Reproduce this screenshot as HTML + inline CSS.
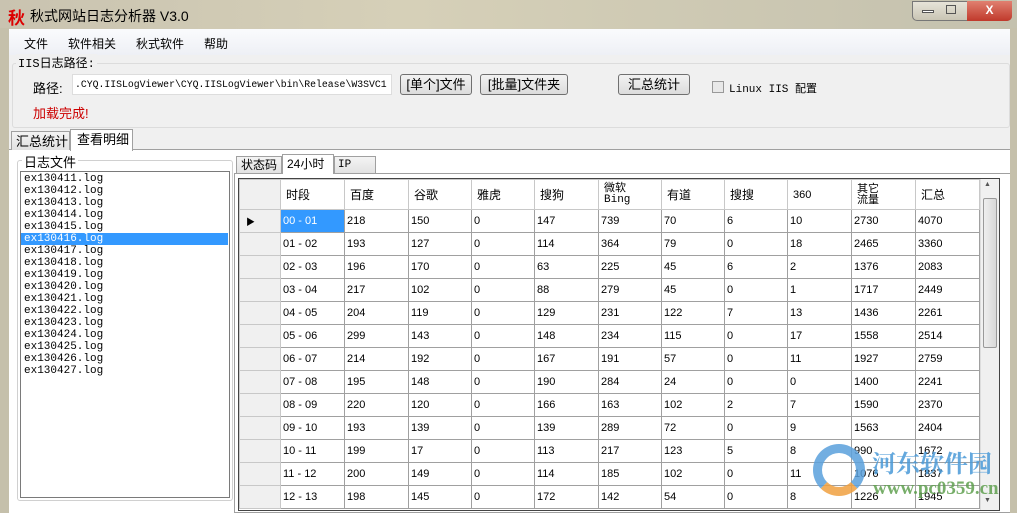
<!DOCTYPE html>
<html><head><meta charset="utf-8"><style>
*{margin:0;padding:0;box-sizing:border-box}
body{width:1017px;height:513px;overflow:hidden;position:relative;background:#f0f0f0;font-family:"Liberation Sans","Noto Sans CJK SC",sans-serif;font-size:12px;color:#000}
.a{position:absolute}
.title{left:0;top:0;width:1017px;height:30px;background:linear-gradient(90deg,#c9c3b0 0%,#d6d0b8 40%,#c4c1ae 100%)}
.frame{left:0;top:28px;width:9px;height:485px;background:#c5c0ab}
.frameR{left:1010px;top:28px;width:7px;height:485px;background:#c5c0ab}
.btn{border:1px solid #707070;border-radius:3px;background:linear-gradient(#f2f2f2,#dcdcdc);text-align:center;line-height:20px;font-size:13px}
.mono{font-family:"Liberation Mono","Noto Sans CJK SC",monospace}
table{border-collapse:collapse;table-layout:fixed}
td{border:1px solid #a0a0a0;height:23px;padding-left:2px;font-size:11px;white-space:nowrap;overflow:hidden}
tr.h td{height:30px;font-size:12px;padding-left:5px;border-color:#c8c8c8}
td.rh{background:#f0f0f0;border-color:#c8c8c8}
</style></head><body>
<div class="a title"></div>
<div class="a" style="left:8px;top:4px;color:#d00;font-size:17px;font-weight:bold">秋</div>
<div class="a" style="left:30px;top:6px;font-size:14px">秋式网站日志分析器 V3.0</div>
<div class="a" style="left:912px;top:1px;width:100px;height:20px;border:1px solid #777;border-radius:0 0 5px 5px;background:linear-gradient(#e6e3d8,#c9c5b4)"></div>
<div class="a" style="left:967px;top:1px;width:45px;height:20px;border-radius:0 0 5px 0;background:linear-gradient(#e08070,#c0392b);color:#fff;text-align:center;font-weight:bold;line-height:18px">X</div>
<div class="a" style="left:922px;top:10px;width:12px;height:3px;border:1px solid #555;background:#fff"></div>
<div class="a" style="left:946px;top:5px;width:10px;height:9px;border:1px solid #555"></div>
<div class="a frame"></div><div class="a frameR"></div>
<div class="a" style="left:9px;top:29px;width:1001px;height:26px;background:linear-gradient(#fafbfd,#eef0f5)"></div>
<div class="a" style="left:24px;top:35px;font-size:12px">文件</div>
<div class="a" style="left:68px;top:35px;font-size:12px">软件相关</div>
<div class="a" style="left:136px;top:35px;font-size:12px">秋式软件</div>
<div class="a" style="left:204px;top:35px;font-size:12px">帮助</div>
<div class="a" style="left:12px;top:63px;width:998px;height:65px;border:1px solid #dcdcdc;border-radius:3px"></div>
<div class="a mono" style="left:16px;top:54px;background:#f0f0f0;padding:0 2px;font-size:12px">IIS日志路径:</div>
<div class="a" style="left:33px;top:78px;font-size:13px">路径:</div>
<div class="a mono" style="left:72px;top:74px;width:320px;height:21px;background:#fff;border:1px solid #ddd;font-size:9.8px;line-height:19px;padding-left:2px;overflow:hidden;white-space:nowrap">.CYQ.IISLogViewer\CYQ.IISLogViewer\bin\Release\W3SVC1</div>
<div class="a btn" style="left:400px;top:74px;width:72px;height:21px">[单个]文件</div>
<div class="a btn" style="left:480px;top:74px;width:88px;height:21px">[批量]文件夹</div>
<div class="a btn" style="left:618px;top:74px;width:72px;height:21px">汇总统计</div>
<div class="a" style="left:712px;top:81px;width:12px;height:12px;border:1px solid #999;background:#e8e8e8"></div>
<div class="a mono" style="left:729px;top:80px;font-size:11px">Linux IIS 配置</div>
<div class="a" style="left:33px;top:103px;color:#c00;font-size:13px">加载完成!</div>
<div class="a" style="left:9px;top:149px;width:1001px;height:364px;background:#fff;border-top:1px solid #a0a0a0"></div>
<div class="a" style="left:11px;top:131px;width:59px;height:19px;border:1px solid #a0a0a0;border-bottom:none;background:linear-gradient(#f4f4f4,#e2e2e2);font-size:13px;padding-left:4px;line-height:19px">汇总统计</div>
<div class="a" style="left:70px;top:129px;width:63px;height:22px;border:1px solid #a0a0a0;border-bottom:none;background:#fff;font-size:13px;padding-left:6px;line-height:20px">查看明细</div>
<div class="a" style="left:17px;top:160px;width:216px;height:341px;border:1px solid #d0d0d0;border-radius:3px"></div>
<div class="a" style="left:22px;top:152px;background:#fff;padding:0 2px;font-size:13px">日志文件</div>
<div class="a mono" style="left:20px;top:171px;width:210px;height:327px;border:1px solid #7a7a7a;font-size:11px;line-height:12px;padding-top:1px">
<div style="padding-left:3px">ex130411.log</div><div style="padding-left:3px">ex130412.log</div><div style="padding-left:3px">ex130413.log</div><div style="padding-left:3px">ex130414.log</div><div style="padding-left:3px">ex130415.log</div><div style="padding-left:3px;background:#3399ff;color:#fff;width:207px">ex130416.log</div><div style="padding-left:3px">ex130417.log</div><div style="padding-left:3px">ex130418.log</div><div style="padding-left:3px">ex130419.log</div><div style="padding-left:3px">ex130420.log</div><div style="padding-left:3px">ex130421.log</div><div style="padding-left:3px">ex130422.log</div><div style="padding-left:3px">ex130423.log</div><div style="padding-left:3px">ex130424.log</div><div style="padding-left:3px">ex130425.log</div><div style="padding-left:3px">ex130426.log</div><div style="padding-left:3px">ex130427.log</div></div>
<div class="a" style="left:234px;top:173px;width:776px;height:340px;border:1px solid #a0a0a0;border-right:none"></div>
<div class="a" style="left:236px;top:156px;width:46px;height:18px;border:1px solid #a0a0a0;background:linear-gradient(#f4f4f4,#e2e2e2);font-size:12px;padding-left:4px;line-height:17px">状态码</div>
<div class="a" style="left:282px;top:154px;width:52px;height:20px;border:1px solid #a0a0a0;border-bottom:none;background:#fff;font-size:12px;padding-left:4px;line-height:18px">24小时</div>
<div class="a mono" style="left:334px;top:156px;width:42px;height:18px;border:1px solid #a0a0a0;background:linear-gradient(#f4f4f4,#e2e2e2);font-size:11px;padding-left:3px;line-height:17px">IP</div>
<div class="a" style="left:238px;top:178px;width:762px;height:333px;border:1px solid #444;background:#fff;overflow:hidden">
<table style="width:740px">
<colgroup><col style="width:41px"><col style="width:64px"><col style="width:64px"><col style="width:63px"><col style="width:63px"><col style="width:64px"><col style="width:63px"><col style="width:63px"><col style="width:63px"><col style="width:64px"><col style="width:64px"><col style="width:64px"></colgroup>
<tr class="h"><td class="rh"></td><td>时段</td><td>百度</td><td>谷歌</td><td>雅虎</td><td>搜狗</td><td style="line-height:11px;font-size:11px">微软<br><span class="mono">Bing</span></td><td>有道</td><td>搜搜</td><td style="font-size:11px">360</td><td style="line-height:11px;font-size:11px">其它<br>流量</td><td>汇总</td></tr>
<tr><td class="rh" style="font-size:9px;padding-left:6px">▶</td><td style="background:#3399ff;color:#fff">00 - 01</td><td>218</td><td>150</td><td>0</td><td>147</td><td>739</td><td>70</td><td>6</td><td>10</td><td>2730</td><td>4070</td></tr>
<tr><td class="rh"></td><td>01 - 02</td><td>193</td><td>127</td><td>0</td><td>114</td><td>364</td><td>79</td><td>0</td><td>18</td><td>2465</td><td>3360</td></tr>
<tr><td class="rh"></td><td>02 - 03</td><td>196</td><td>170</td><td>0</td><td>63</td><td>225</td><td>45</td><td>6</td><td>2</td><td>1376</td><td>2083</td></tr>
<tr><td class="rh"></td><td>03 - 04</td><td>217</td><td>102</td><td>0</td><td>88</td><td>279</td><td>45</td><td>0</td><td>1</td><td>1717</td><td>2449</td></tr>
<tr><td class="rh"></td><td>04 - 05</td><td>204</td><td>119</td><td>0</td><td>129</td><td>231</td><td>122</td><td>7</td><td>13</td><td>1436</td><td>2261</td></tr>
<tr><td class="rh"></td><td>05 - 06</td><td>299</td><td>143</td><td>0</td><td>148</td><td>234</td><td>115</td><td>0</td><td>17</td><td>1558</td><td>2514</td></tr>
<tr><td class="rh"></td><td>06 - 07</td><td>214</td><td>192</td><td>0</td><td>167</td><td>191</td><td>57</td><td>0</td><td>11</td><td>1927</td><td>2759</td></tr>
<tr><td class="rh"></td><td>07 - 08</td><td>195</td><td>148</td><td>0</td><td>190</td><td>284</td><td>24</td><td>0</td><td>0</td><td>1400</td><td>2241</td></tr>
<tr><td class="rh"></td><td>08 - 09</td><td>220</td><td>120</td><td>0</td><td>166</td><td>163</td><td>102</td><td>2</td><td>7</td><td>1590</td><td>2370</td></tr>
<tr><td class="rh"></td><td>09 - 10</td><td>193</td><td>139</td><td>0</td><td>139</td><td>289</td><td>72</td><td>0</td><td>9</td><td>1563</td><td>2404</td></tr>
<tr><td class="rh"></td><td>10 - 11</td><td>199</td><td>17</td><td>0</td><td>113</td><td>217</td><td>123</td><td>5</td><td>8</td><td>990</td><td>1672</td></tr>
<tr><td class="rh"></td><td>11 - 12</td><td>200</td><td>149</td><td>0</td><td>114</td><td>185</td><td>102</td><td>0</td><td>11</td><td>1076</td><td>1837</td></tr>
<tr><td class="rh"></td><td>12 - 13</td><td>198</td><td>145</td><td>0</td><td>172</td><td>142</td><td>54</td><td>0</td><td>8</td><td>1226</td><td>1945</td></tr>
</table>
<div class="a" style="left:741px;top:0;width:19px;height:331px;background:#f0f0f0;border-left:1px solid #ddd"></div>
<div class="a" style="left:745px;top:2px;font-size:7px;color:#555">▲</div>
<div class="a" style="left:744px;top:19px;width:14px;height:150px;border:1px solid #999;border-radius:2px;background:linear-gradient(90deg,#eee,#d8d8d8)"></div>
<div class="a" style="left:745px;top:318px;font-size:7px;color:#555">▼</div>
</div>
<div class="a" style="left:813px;top:444px;width:52px;height:52px;border-radius:50%;border:9px solid #5aa0dc;border-bottom-color:#f0a040;opacity:.85"></div>
<div class="a" style="left:872px;top:444px;font-size:24px;font-weight:bold;color:#4a9ad8;opacity:.85;font-family:'Noto Serif CJK SC',serif">河东软件园</div>
<div class="a" style="left:873px;top:478px;font-size:19px;font-weight:bold;color:#60a050;opacity:.85;font-family:'Liberation Serif',serif">www.pc0359.cn</div>
</body></html>
